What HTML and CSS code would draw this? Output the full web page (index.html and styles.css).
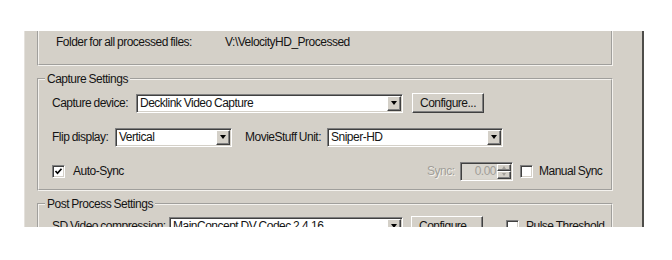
FILE: index.html
```html
<!DOCTYPE html>
<html lang="en">

<head>
    <meta charset="UTF-8">
    <title>Capture Options</title>
    <link rel="stylesheet" href="styles.css">
</head>

<body>
    <div class="window">
        <div class="group group-top">
            <div class="row">
                <span class="lbl lbl-folder">Folder for all processed files:</span>
                <span>V:\VelocityHD_Processed</span>
            </div>
        </div>

        <fieldset class="group">
            <legend>Capture Settings</legend>
            <div class="row row-first">
                <span class="lbl lbl-device">Capture device:</span>
                <div class="combo combo-device">
                    <span class="combo-text">Decklink Video Capture</span>
                    <span class="combo-btn"><i class="tri"></i></span>
                </div>
                <div class="btn">Configure...</div>
            </div>
            <div class="row">
                <span class="lbl lbl-flip">Flip display:</span>
                <div class="combo combo-flip">
                    <span class="combo-text">Vertical</span>
                    <span class="combo-btn"><i class="tri"></i></span>
                </div>
                <span class="lbl lbl-unit">MovieStuff Unit:</span>
                <div class="combo combo-unit">
                    <span class="combo-text">Sniper-HD</span>
                    <span class="combo-btn"><i class="tri"></i></span>
                </div>
            </div>
            <div class="row">
                <div class="check-line check-auto">
                    <span class="check">
                        <svg width="9" height="9" viewBox="0 0 9 9"><polyline points="1.5,4 3.5,6.2 7.5,1.8" fill="none" stroke="#000" stroke-width="1.7"/></svg>
                    </span>
                    <span>Auto-Sync</span>
                </div>
                <span class="lbl lbl-sync disabled">Sync:</span>
                <div class="spin">
                    <span class="spin-text">0.00</span>
                    <span class="spin-btns">
                        <span class="spin-btn"><i class="tri-up"></i></span>
                        <span class="spin-btn"><i class="tri-down"></i></span>
                    </span>
                </div>
                <div class="check-line check-manual">
                    <span class="check"></span>
                    <span>Manual Sync</span>
                </div>
            </div>
        </fieldset>

        <fieldset class="group group-post">
            <legend>Post Process Settings</legend>
            <div class="row row-first">
                <span class="lbl lbl-sd">SD Video compression:</span>
                <div class="combo combo-sd">
                    <span class="combo-text">MainConcept DV Codec 2.4.16</span>
                    <span class="combo-btn"><i class="tri"></i></span>
                </div>
                <div class="btn">Configure...</div>
                <div class="check-line check-pulse">
                    <span class="check"></span>
                    <span>Pulse Threshold</span>
                </div>
            </div>
        </fieldset>
    </div>
</body>

</html>
```

FILE: styles.css
```css
body {
    margin: 0;
    background-color: white;
    font-family: "Liberation Sans", Arial, sans-serif;
    font-size: 12px;
    line-height: 14px;
    letter-spacing: -0.5px;
    word-spacing: -0.5px;
    color: #141414;
}

.window {
    margin: 31px 0 0 24px;
    width: 617px;
    height: 196px;
    background-color: #d4d0c8;
    border-left: 1px solid #e4e1dc;
    border-right: 2px solid #4e4d4a;
    overflow: hidden;
    box-sizing: content-box;
}

.group {
    box-sizing: border-box;
    width: 576px;
    margin: 6px 0 0 12px;
    padding: 0 0 8px 13px;
    border: 2px groove #f4f2ee;
    min-width: 0;
}

.group-top {
    margin-top: 0;
    height: 35px;
    border-top: none;
    padding: 1px 0 0 17px;
}

.group-top .row {
    margin-top: 0;
}

.group-post {
    padding-bottom: 20px;
}

legend {
    margin-left: -7px;
    padding: 0 2px;
}

.row {
    display: flex;
    align-items: center;
    height: 20px;
    margin-top: 14px;
}

.row-first {
    margin-top: 7px;
}

.group-post .row-first {
    margin-top: 5px;
}

.lbl {
    flex: none;
    white-space: nowrap;
}

.lbl-folder { width: 169px; }
.lbl-device { width: 84px; }
.lbl-flip { width: 63px; }
.lbl-unit { width: 82px; margin-left: 13px; }
.lbl-sync { width: 33px; }
.lbl-sd { width: 117px; }

.disabled {
    color: #a19e98;
    text-shadow: 1px 1px 0 #f4f2ee;
}

/* combo boxes */
.combo {
    box-sizing: border-box;
    display: flex;
    height: 19px;
    background-color: white;
    border: 1px solid;
    border-color: #808080 #ffffff #ffffff #808080;
    box-shadow: inset 1px 1px 0 #404040, inset -1px -1px 0 #d4d0c8;
    padding: 1px;
}

.combo-device { width: 267px; }
.combo-flip { width: 117px; }
.combo-unit { width: 176px; }
.combo-sd { width: 234px; }

.combo-text {
    flex: 1;
    padding-left: 2px;
    line-height: 15px;
    white-space: nowrap;
    overflow: hidden;
}

.combo-btn {
    box-sizing: border-box;
    width: 14px;
    display: flex;
    justify-content: center;
    align-items: center;
    background-color: #d4d0c8;
    border: 1px solid;
    border-color: #ffffff #404040 #404040 #ffffff;
    box-shadow: inset -1px -1px 0 #808080;
}

.tri {
    width: 0;
    height: 0;
    border-left: 3.5px solid transparent;
    border-right: 3.5px solid transparent;
    border-top: 4px solid #000;
}

/* push button */
.btn {
    box-sizing: border-box;
    width: 72px;
    height: 20px;
    margin-left: 9px;
    line-height: 18px;
    text-align: center;
    background-color: #d4d0c8;
    border: 1px solid;
    border-color: #ffffff #404040 #404040 #ffffff;
    box-shadow: inset -1px -1px 0 #808080;
}

.group-post .btn {
    margin-left: 8px;
}

/* check boxes */
.check-line {
    display: flex;
    align-items: center;
    flex: none;
}

.check {
    box-sizing: border-box;
    width: 13px;
    height: 13px;
    margin-right: 8px;
    background-color: white;
    border: 1px solid;
    border-color: #808080 #ffffff #ffffff #808080;
    box-shadow: inset 1px 1px 0 #404040, inset -1px -1px 0 #d4d0c8;
    display: flex;
    justify-content: center;
    align-items: center;
}

.check-auto { width: 375px; }
.check-manual { margin-left: 7px; }
.check-manual .check { margin-right: 6px; }
.check-pulse { margin-left: 23px; }
.check-pulse .check { margin-right: 7px; }

/* spin box */
.spin {
    box-sizing: border-box;
    display: flex;
    width: 53px;
    height: 19px;
    background-color: #d9d6cf;
    border: 1px solid;
    border-color: #808080 #ffffff #ffffff #808080;
    box-shadow: inset 1px 1px 0 #404040, inset -1px -1px 0 #d4d0c8;
    padding: 1px;
}

.spin-text {
    flex: 1;
    text-align: right;
    padding-right: 1px;
    line-height: 15px;
    color: #a19e98;
}

.spin-btns {
    display: flex;
    flex-direction: column;
    width: 14px;
}

.spin-btn {
    box-sizing: border-box;
    flex: 1;
    display: flex;
    justify-content: center;
    align-items: center;
    background-color: #d4d0c8;
    border: 1px solid;
    border-color: #ffffff #404040 #404040 #ffffff;
    box-shadow: inset -1px -1px 0 #808080;
}

.tri-up,
.tri-down {
    width: 0;
    height: 0;
    border-left: 2.5px solid transparent;
    border-right: 2.5px solid transparent;
}

.tri-up { border-bottom: 3px solid #a19e98; }
.tri-down { border-top: 3px solid #a19e98; }
```
